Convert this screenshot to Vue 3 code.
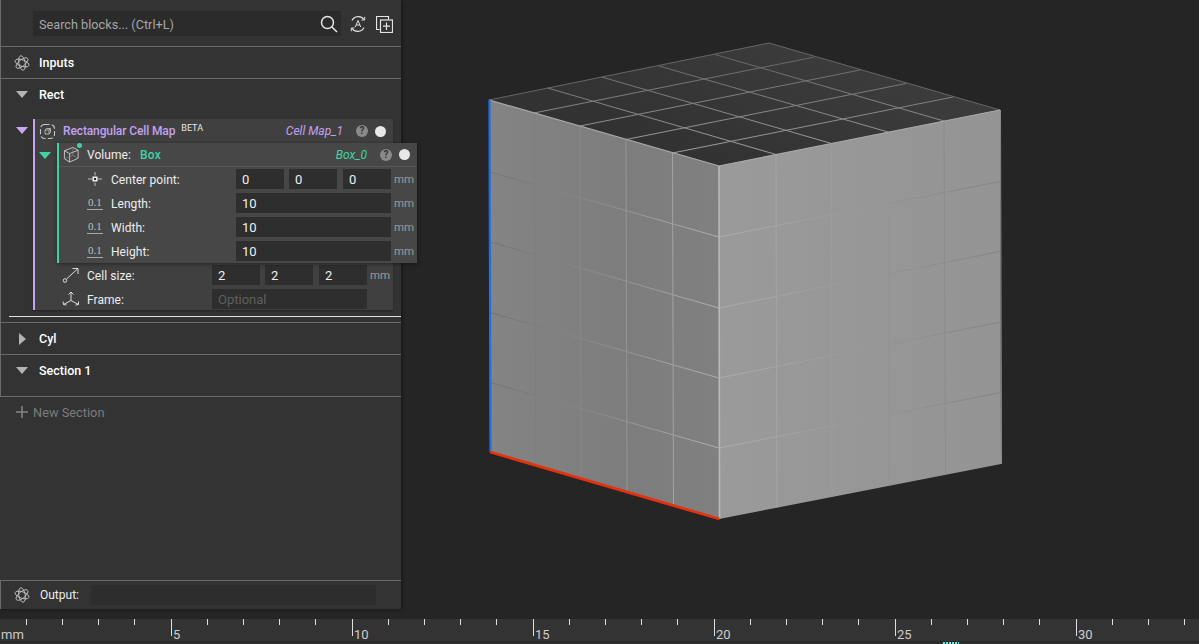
<script setup>
const leftV = [[534, 113, 536, 465], [580, 126, 581, 478.5], [626, 139.5, 627, 492], [672.5, 153, 673.5, 505.5]]
const leftHz = [[490, 172, 719, 237], [490, 242, 719, 308], [490, 312.5, 719, 378], [490, 382.5, 719, 448]]
const rightV = [[776, 154.5, 776.8, 507.5], [831.5, 143.5, 832, 496.5], [888, 132, 889, 485], [944, 121, 945.5, 474]]
const rightHz = [[719, 237, 1000, 181.5], [719, 308, 1000, 251.5], [719, 378, 1000.5, 322], [719, 448, 1001, 392.5]]
const topA = [[547.6, 88, 776, 154.5], [601.7, 77, 831.5, 143.5], [659, 66, 888, 132], [715, 54.5, 944, 121]]
const topB = [[534, 113, 814.7, 57], [580, 126, 860, 70], [626, 139.5, 906, 83.5], [672.5, 153, 953, 97]]

const inner = [
  { key: 'center', label: 'Center point:', values: ['0', '0', '0'] },
  { key: 'len', label: 'Length:', values: ['10'] },
  { key: 'wid', label: 'Width:', values: ['10'] },
  { key: 'hei', label: 'Height:', values: ['10'] }
]

const ticks = []
for (let n = 1; n <= 33; n++) {
  ticks.push({ n, x: Math.round(170.5 + 36.2 * (n - 5)), major: n % 5 === 0 })
}
</script>

<template>
  <div class="app">
    <div class="main">
      <aside class="panel">
        <section class="sec sec-search">
          <div class="search">
            <span class="search-text">Search blocks... (Ctrl+L)</span>
            <svg class="ic-search" width="18" height="18" viewBox="0 0 18 18" fill="none" stroke="#e6e6e6" stroke-width="1.5">
              <circle cx="7.5" cy="7.5" r="6" />
              <path d="M12 12l5 5" />
            </svg>
          </div>
          <svg class="ic-tool" width="18" height="18" viewBox="0 0 18 18" fill="none" stroke="#e0e0e0" stroke-width="1.2">
            <path d="M3 5.5A7 7 0 0 1 15 4.5M15 12.5A7 7 0 0 1 3 13.5" />
            <path d="M12.5 5h3.2V1.8M5.5 13H2.3v3.2" stroke-width="1" />
            <path d="M6.3 12L9 5.5 11.7 12M7.2 10h3.6" stroke-width="1" />
          </svg>
          <svg class="ic-tool ic-new" width="17" height="17" viewBox="0 0 17 17" fill="none" stroke="#e6e6e6" stroke-width="1.2">
            <path d="M3.5 13.5h-3v-13h12v3" />
            <rect x="4.5" y="4" width="12" height="12.500" />
            <path d="M10.5 6.500v7.500M7 10.200h7" />
          </svg>
        </section>

        <section class="sec sec-head">
          <span class="lead">
            <svg width="16" height="16" viewBox="0 0 16 16" fill="none" stroke="#c4c4c4" stroke-width="0.9">
              <ellipse cx="8" cy="8" rx="7.300" ry="3.200" transform="rotate(20 8 8)" />
              <ellipse cx="8" cy="8" rx="7.300" ry="3.200" transform="rotate(80 8 8)" />
              <ellipse cx="8" cy="8" rx="7.300" ry="3.200" transform="rotate(140 8 8)" />
            </svg>
          </span>
          <span class="sec-title">Inputs</span>
        </section>

        <section class="sec sec-rect">
          <div class="sec-line">
            <span class="lead"><i class="caret down grey"></i></span>
            <span class="sec-title">Rect</span>
          </div>
          <div class="block-wrap">
            <span class="block-caret"><i class="caret down purple"></i></span>
            <div class="card card-purple">
              <div class="card-head">
                <svg class="ic-head" width="17" height="17" viewBox="0 0 17 17" fill="none" stroke="#c8c8c8" stroke-width="1.1">
                  <rect x="1.5" y="1.5" width="14" height="14" rx="4" stroke-dasharray="5 2.3" />
                  <path d="M6 7h4v4H6zM6 7l1.500-1.500h4V9.500l-1.500 1.500M10 7l1.500-1.500" stroke-width="0.8" />
                </svg>
                <span class="title purple-t">Rectangular Cell Map</span>
                <sup class="beta">BETA</sup>
                <span class="alias purple-t">Cell Map_1</span>
                <span class="help">?</span>
                <span class="dot"></span>
              </div>

              <div class="nested">
                <span class="nested-caret"><i class="caret down green"></i></span>
                <div class="card card-green">
                  <div class="card-head head-rule">
                    <svg class="ic-box" width="17" height="17" viewBox="0 0 18 18" fill="none" stroke="#c8c8c8" stroke-width="1">
                      <path d="M1.5 5L10.5 1.5 16 4.5V13L7 17 1.5 13.5z" />
                      <path d="M1.5 5L7 8v9M7 8l9-3.500" />
                      <path d="M10.500 1.500V10L1.500 13.500M10.500 10L16 13" stroke="#8c8c8c" stroke-width="0.7" />
                    </svg>
                    <span class="green-badge"></span>
                    <span class="vol">Volume:</span>
                    <span class="title green-t">Box</span>
                    <span class="alias green-t">Box_0</span>
                    <span class="help">?</span>
                    <span class="dot"></span>
                  </div>
                  <div v-for="r in inner" :key="r.key" class="row">
                    <span class="row-icon">
                      <svg v-if="r.key === 'center'" class="ic-center" width="16" height="16" viewBox="0 0 16 16">
                        <path d="M1 8h4.500M10.500 8H15M8 1v3.500M8 11.500V15" stroke="#bdbdbd" stroke-width="1" fill="none" />
                        <rect x="5.500" y="5.500" width="5" height="5" fill="#f0f0f0" />
                        <rect x="7" y="7" width="2" height="2" fill="#222" />
                      </svg>
                      <span v-else class="num-ic">0.1</span>
                    </span>
                    <span class="label">{{ r.label }}</span>
                    <div class="fields">
                      <span v-for="(v, i) in r.values" :key="i" class="inp">{{ v }}</span>
                    </div>
                    <span class="unit">mm</span>
                  </div>
                </div>
              </div>

              <div class="row row-outer">
                <span class="row-icon outer-icon">
                  <svg width="18" height="16" viewBox="0 0 18 16" fill="none" stroke="#dcdcdc" stroke-width="1">
                    <circle cx="3" cy="13.500" r="1.800" />
                    <path d="M4.500 12L16 1.500M10.500 1.500H16V7" />
                  </svg>
                </span>
                <span class="label">Cell size:</span>
                <div class="fields">
                  <span class="inp">2</span><span class="inp">2</span><span class="inp">2</span>
                </div>
                <span class="unit">mm</span>
              </div>
              <div class="row row-outer">
                <span class="row-icon outer-icon">
                  <svg width="18" height="16" viewBox="0 0 18 16" fill="none" stroke="#dcdcdc" stroke-width="1">
                    <path d="M9 9.500V1M6.500 3.500L9 1l2.500 2.500M9 9.500L1.500 13.500M1 10.500l.5 3 3 .5M9 9.500l7.500 4M16.500 10.500l0 3-3 .5" />
                  </svg>
                </span>
                <span class="label">Frame:</span>
                <div class="fields">
                  <span class="inp placeholder">Optional</span>
                </div>
              </div>
            </div>
          </div>
          <div class="white-rule"></div>
        </section>

        <section class="sec sec-head">
          <span class="lead"><i class="caret right grey"></i></span>
          <span class="sec-title">Cyl</span>
        </section>

        <section class="sec sec-s1">
          <span class="lead"><i class="caret down grey"></i></span>
          <span class="sec-title">Section 1</span>
        </section>

        <section class="sec-new">
          <span class="plus">
            <svg width="12" height="12" viewBox="0 0 12 12" stroke="#858585" stroke-width="1.500" fill="none">
              <path d="M6 0v12M0 6h12" />
            </svg>
          </span>
          <span class="new-text">New Section</span>
        </section>

        <section class="sec-output">
          <span class="lead">
            <svg width="16" height="16" viewBox="0 0 16 16" fill="none" stroke="#c4c4c4" stroke-width="0.9">
              <ellipse cx="8" cy="8" rx="7.300" ry="3.200" transform="rotate(20 8 8)" />
              <ellipse cx="8" cy="8" rx="7.300" ry="3.200" transform="rotate(80 8 8)" />
              <ellipse cx="8" cy="8" rx="7.300" ry="3.200" transform="rotate(140 8 8)" />
            </svg>
          </span>
          <span class="out-label">Output:</span>
          <span class="out-field"></span>
        </section>
      </aside>

      <div class="viewport">
        <svg class="scene" width="798" height="619" viewBox="401 0 798 619">
          <defs>
            <linearGradient id="topFill" gradientUnits="userSpaceOnUse" x1="719" y1="166" x2="769" y2="43">
              <stop offset="0" stop-color="#323232" />
              <stop offset="1" stop-color="#3b3b3b" />
            </linearGradient>
            <linearGradient id="leftFill" gradientUnits="userSpaceOnUse" x1="489" y1="0" x2="719" y2="0">
              <stop offset="0" stop-color="#848484" />
              <stop offset="0.6" stop-color="#7d7d7d" />
              <stop offset="1" stop-color="#808080" />
            </linearGradient>
            <linearGradient id="rightFill" gradientUnits="userSpaceOnUse" x1="719" y1="0" x2="1001" y2="0">
              <stop offset="0" stop-color="#9a9a9a" />
              <stop offset="1" stop-color="#949494" />
            </linearGradient>
            <linearGradient id="topLine" gradientUnits="userSpaceOnUse" x1="0" y1="166" x2="0" y2="43">
              <stop offset="0" stop-color="#a8a8a8" />
              <stop offset="1" stop-color="#5c5c5c" />
            </linearGradient>
            <linearGradient id="leftLine" gradientUnits="userSpaceOnUse" x1="489" y1="0" x2="719" y2="0">
              <stop offset="0" stop-color="#727272" />
              <stop offset="0.45" stop-color="#8a8a8a" />
              <stop offset="1" stop-color="#b0b0b0" />
            </linearGradient>
            <linearGradient id="rightLine" gradientUnits="userSpaceOnUse" x1="719" y1="0" x2="1001" y2="0">
              <stop offset="0" stop-color="#aeaeae" />
              <stop offset="0.4" stop-color="#9c9c9c" />
              <stop offset="1" stop-color="#828282" />
            </linearGradient>
          </defs>

          <polygon points="489,100 769,43 1000,110 719,166" fill="url(#topFill)" stroke="#666" stroke-width="1" />
          <polygon points="489,100 719,166 719,519 490,452" fill="url(#leftFill)" />
          <polygon points="719,166 1000,110 1001,464 719,519" fill="url(#rightFill)" />

          <g stroke="url(#topLine)" stroke-width="1">
            <line v-for="(l, i) in topA" :key="'ta' + i" :x1="l[0]" :y1="l[1]" :x2="l[2]" :y2="l[3]" />
            <line v-for="(l, i) in topB" :key="'tb' + i" :x1="l[0]" :y1="l[1]" :x2="l[2]" :y2="l[3]" />
          </g>
          <g stroke="url(#leftLine)" stroke-width="1">
            <line v-for="(l, i) in leftV" :key="'lv' + i" :x1="l[0]" :y1="l[1]" :x2="l[2]" :y2="l[3]" />
            <line v-for="(l, i) in leftHz" :key="'lh' + i" :x1="l[0]" :y1="l[1]" :x2="l[2]" :y2="l[3]" />
          </g>
          <g stroke="url(#rightLine)" stroke-width="1">
            <line v-for="(l, i) in rightV" :key="'rv' + i" :x1="l[0]" :y1="l[1]" :x2="l[2]" :y2="l[3]" />
            <line v-for="(l, i) in rightHz" :key="'rh' + i" :x1="l[0]" :y1="l[1]" :x2="l[2]" :y2="l[3]" />
          </g>

          <path d="M489 100L719 166L1000 110" fill="none" stroke="#a8a8a8" stroke-width="1.200" />
          <line x1="719" y1="166" x2="719.500" y2="519" stroke="#b8b8b8" stroke-width="1.600" />
          <line x1="1000.500" y1="110" x2="1001.500" y2="464" stroke="#8c8c8c" stroke-width="1" />
          <line x1="489.500" y1="100" x2="490.500" y2="452" stroke="#1f70e6" stroke-width="2.200" />
          <line x1="490" y1="452" x2="719.500" y2="519" stroke="#e4320f" stroke-width="2.800" />
        </svg>
      </div>
    </div>

    <div class="ruler">
      <span class="mm">mm</span>
      <template v-for="t in ticks" :key="t.n">
        <i class="tick" :class="{ major: t.major }" :style="{ left: t.x + 'px' }"></i>
        <span v-if="t.major" class="tick-label" :style="{ left: t.x + 2 + 'px' }">{{ t.n }}</span>
      </template>
    </div>
    <div class="foot"><span class="hatch"></span></div>
  </div>
</template>

<style>
html, body { margin: 0; background: #252525; }
</style>

<style scoped>
.app {
  width: 1199px;
  height: 644px;
  overflow: hidden;
  background: #252525;
  font-family: Roboto, "Liberation Sans", sans-serif;
  font-size: 12px;
  color: #e8e8e8;
  display: flex;
  flex-direction: column;
}
.main { height: 619px; display: flex; }
.panel {
  width: 401px;
  height: 609px;
  flex: none;
  background: #333;
  box-shadow: 2px 1px 3px rgba(0, 0, 0, .3);
  display: flex;
  flex-direction: column;
  position: relative;
  z-index: 1;
}
.viewport { flex: 1; }
.scene { display: block; }

.sec {
  border-left: 1px solid #6a6a6a;
  border-bottom: 1px solid #6a6a6a;
  box-sizing: border-box;
}
.sec-search {
  height: 47px;
  display: flex;
  align-items: flex-start;
  padding: 11px 0 0 32px;
}
.search {
  width: 308px;
  height: 25px;
  background: #2b2b2b;
  display: flex;
  align-items: center;
  justify-content: space-between;
  padding: 1px 3px 0 6px;
  box-sizing: border-box;
  color: #a6a6a6;
  font-size: 12.700px;
}
.ic-search { margin-top: -1px; }
.ic-tool { margin: 4px 0 0 8px; }
.ic-new { margin-left: 9px; margin-top: 5px; }

.sec-head { height: 32px; display: flex; align-items: center; }
.sec-s1 { height: 42px; display: flex; align-items: center; padding-bottom: 10px; }
.lead { width: 38px; flex: none; display: flex; justify-content: center; padding-left: 4px; box-sizing: border-box; }
.sec-title { font-weight: 500; font-size: 12.500px; color: #fff; }

.sec-rect { height: 244px; position: relative; }
.sec-line { height: 31px; display: flex; align-items: center; }
.block-wrap { margin-top: 9px; display: flex; padding-left: 15px; }
.block-caret { width: 17px; flex: none; padding-top: 8px; }
.caret { display: block; width: 0; height: 0; border-style: solid; border-color: transparent; }
.caret.down { border-width: 7px 6.500px 0; }
.caret.right { border-width: 6.500px 0 6.500px 7px; }
.caret.grey.down { border-top-color: #b4b4b4; }
.caret.grey.right { border-left-color: #b4b4b4; }
.caret.purple { border-top-color: #cca6f5; }
.caret.green { border-top-color: #3fd3a3; }

.card {
  width: 360px;
  flex: none;
  box-sizing: border-box;
  background: #404040;
  border-left: 2px solid;
}
.card-purple { border-color: #c9a3f0; height: 191px; box-shadow: 0 1px 2px rgba(0, 0, 0, .3); }
.card-green { border-color: #3fd3a3; background: #474747; height: 120px; box-shadow: 0 1px 4px rgba(0, 0, 0, .45); position: relative; }
.card-head { height: 24px; box-sizing: border-box; display: flex; align-items: center; position: relative; }
.head-rule { border-bottom: 1px solid #565656; }
.ic-head { margin-left: 4px; flex: none; }
.ic-box { margin-left: 4px; flex: none; }
.green-badge { position: absolute; left: 18px; top: 0; width: 5px; height: 5px; border-radius: 50%; background: #3fd3a3; }
.title { margin-left: 7px; font-weight: 500; letter-spacing: -.12px; }
.purple-t { color: #c3a0f2; }
.green-t { color: #3fd3a3; }
.vol { margin-left: 7px; color: #eee; letter-spacing: .05px; }
.card-green .title { margin-left: 9px; letter-spacing: .3px; }
.beta { font-size: 9px; color: #e6e6e6; margin: -6px 0 0 6px; line-height: 1; }
.alias { margin-left: auto; font-style: italic; margin-right: 13px; font-weight: 400; }
.help {
  width: 12px; height: 12px; border-radius: 50%; background: #8a8a8a; color: #333;
  font-size: 10px; font-weight: 700; line-height: 12px; text-align: center; flex: none;
}
.dot { width: 11px; height: 11px; border-radius: 50%; background: #e8e8e8; margin: 0 7px 0 7px; flex: none; }

.nested { display: flex; margin-left: 4px; position: relative; }
.nested-caret { width: 18px; flex: none; padding-top: 9px; box-sizing: border-box; }

.row { height: 24px; display: flex; align-items: center; }
.row-icon { width: 52px; flex: none; display: flex; justify-content: flex-start; padding-left: 28px; box-sizing: border-box; }
.outer-icon { padding-left: 27px; }
.label { width: 125px; flex: none; color: #eee; padding-top: 1px; letter-spacing: .05px; }
.fields { width: 155px; flex: none; display: flex; gap: 5px; }
.inp {
  flex: 1;
  height: 20px;
  box-sizing: border-box;
  background: #2e2e2e;
  padding-left: 6px;
  line-height: 21px;
  font-size: 13px;
  color: #eee;
}
.inp:nth-child(3) { margin-left: 1px; }
.placeholder { color: #5f5f5f; }
.unit { margin-left: 3px; color: #999; font-size: 11.500px; }
.num-ic {
  font-family: "Liberation Serif", serif;
  font-size: 11px;
  line-height: 11px;
  color: #c0c0c0;
  border-bottom: 1px solid #a8a8a8;
  padding: 0 1px 1px;
}
.white-rule { position: absolute; left: 8px; right: 0; top: 237px; height: 1px; background: #e0e0e0; }

.sec-new {
  flex: 1;
  border-left: 1px solid #333;
  display: flex;
  align-items: flex-start;
  padding: 9px 0 0 15px;
  color: #7c7c7c;
}
.plus { width: 12px; height: 12px; }
.new-text { margin-left: 5px; font-size: 12.800px; line-height: 14px; }

.sec-output {
  height: 29px;
  box-sizing: border-box;
  border-top: 1px solid #6a6a6a;
  border-left: 1px solid #6a6a6a;
  display: flex;
  align-items: center;
}
.out-label { color: #eee; width: 51px; margin-left: 1px; flex: none; }
.out-field { width: 285px; height: 20px; background: #2d2d2d; }

.ruler { height: 22px; background: #333; position: relative; color: #ccc; font-size: 13px; }
.mm { position: absolute; left: 1px; top: 8px; line-height: 15px; }
.tick { position: absolute; top: 0; width: 1px; height: 6px; background: #ddd; }
.tick.major { height: 17px; }
.tick-label { position: absolute; top: 8px; line-height: 15px; }
.foot { height: 3px; background: #2a2a2a; display: flex; padding-left: 943px; align-items: flex-end; }
.hatch {
  width: 16px;
  height: 2px;
  background: repeating-linear-gradient(90deg, #6fe6e6 0 2px, transparent 2px 3px);
}
</style>
